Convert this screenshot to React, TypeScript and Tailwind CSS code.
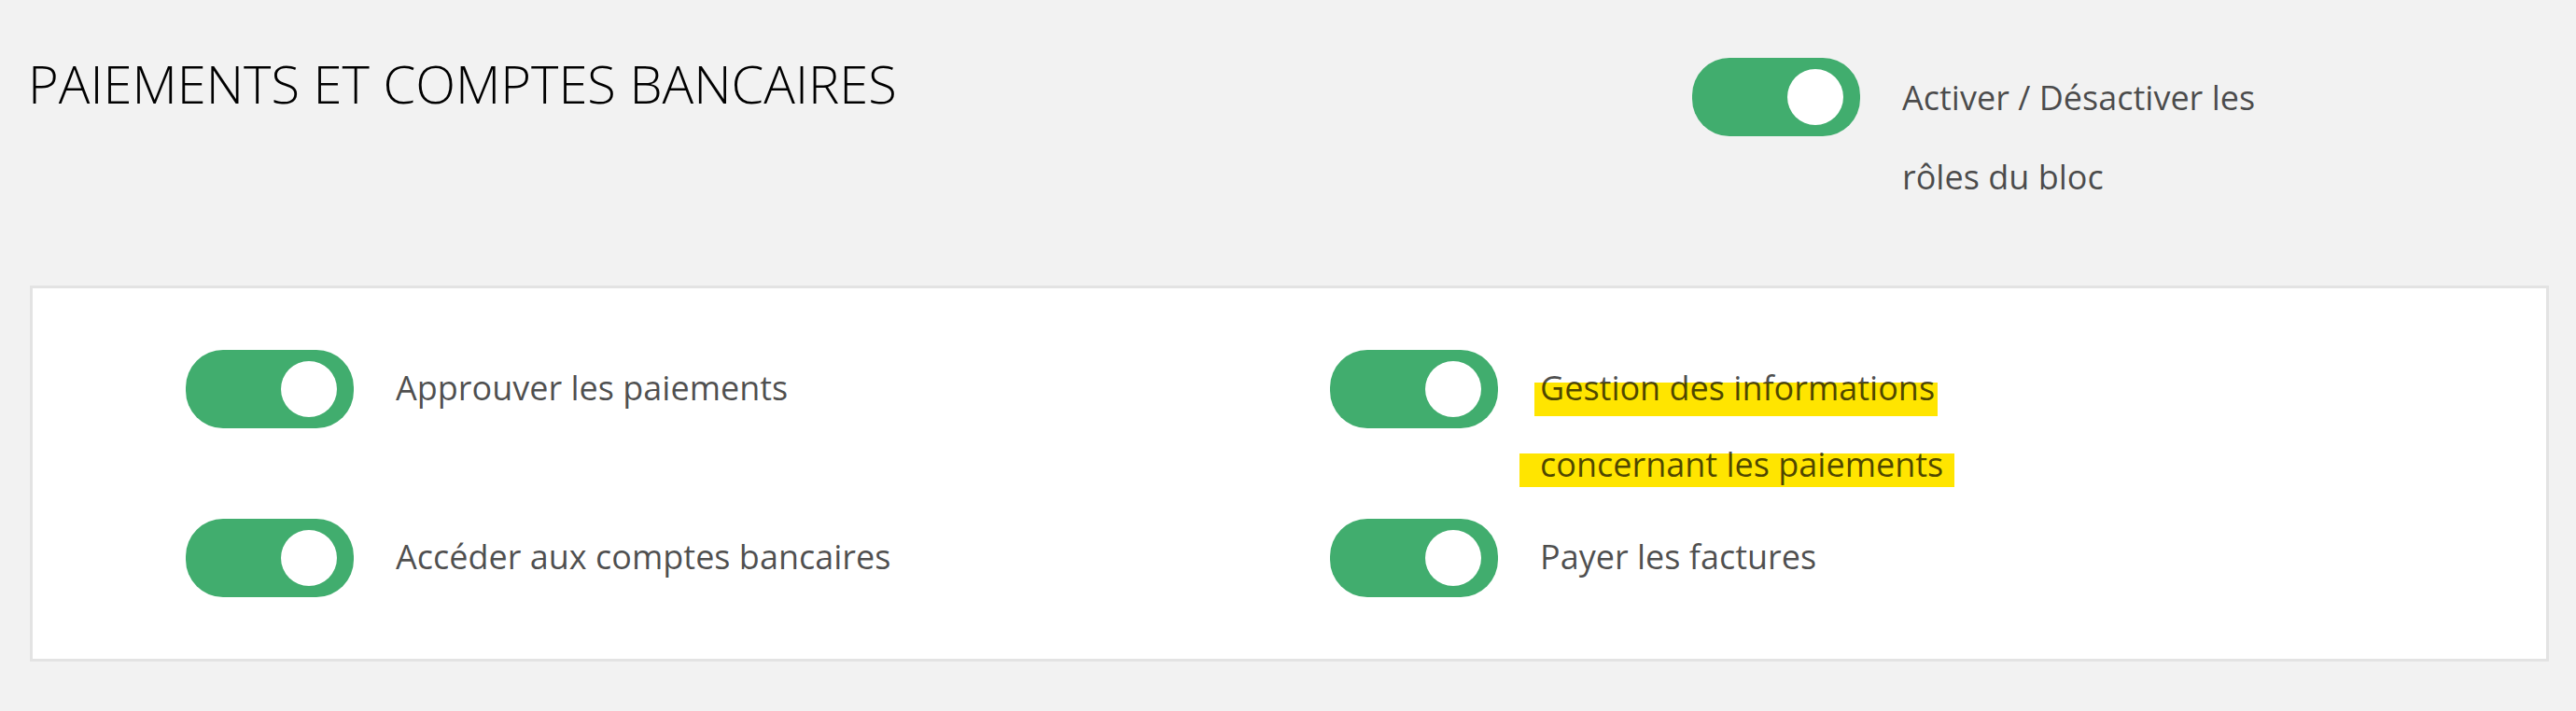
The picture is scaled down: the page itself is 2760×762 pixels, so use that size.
import React from 'react';

const Toggle = () => (
  <div className="flex h-[84px] w-[180px] shrink-0 items-center justify-end rounded-[40px] bg-[#41ad6e] pr-[18px]">
    <span className="h-[60px] w-[60px] rounded-full bg-white" />
  </div>
);

interface RoleRowProps {
  children: React.ReactNode;
}

const RoleRow = ({ children }: RoleRowProps) => (
  <div className="flex items-start gap-[45px]">
    <Toggle />
    <div className="text-[36px] leading-[82px] text-black/70">{children}</div>
  </div>
);

export default function App() {
  return (
    <div className="min-h-screen bg-[#f2f2f2] pl-[32px] pr-[29px] pt-[51px] font-['Open_Sans',sans-serif]">
      <div className="flex items-start">
        <h1 className="-ml-[2px] w-[1783px] shrink-0 text-[56px] leading-[76px] font-light text-black">
          PAIEMENTS ET COMPTES BANCAIRES
        </h1>
        <div className="mt-[11px] flex items-start gap-[45px]">
          <Toggle />
          <p className="w-[400px] text-[36px] leading-[85px] text-black/70">
            Activer / Désactiver les rôles du bloc
          </p>
        </div>
      </div>

      <div className="mt-[74px] border-[3px] border-[#e3e3e3] bg-white pb-[66px] pl-[164px] pt-[66px]">
        <div className="grid grid-cols-[1226px_1fr] gap-y-[17px]">
          <RoleRow>Approuver les paiements</RoleRow>
          <RoleRow>
            <span className="-ml-[6px] block w-fit bg-[linear-gradient(transparent_35px,#ffe500_35px,#ffe500_71px,transparent_71px)] pl-[6px] pr-[3px]">
              Gestion des informations
            </span>
            <span className="-ml-[22px] block w-fit bg-[linear-gradient(transparent_29px,#ffe500_29px,#ffe500_65px,transparent_65px)] pl-[22px] pr-[12px]">
              concernant les paiements
            </span>
          </RoleRow>
          <RoleRow>Accéder aux comptes bancaires</RoleRow>
          <RoleRow>Payer les factures</RoleRow>
        </div>
      </div>
    </div>
  );
}
